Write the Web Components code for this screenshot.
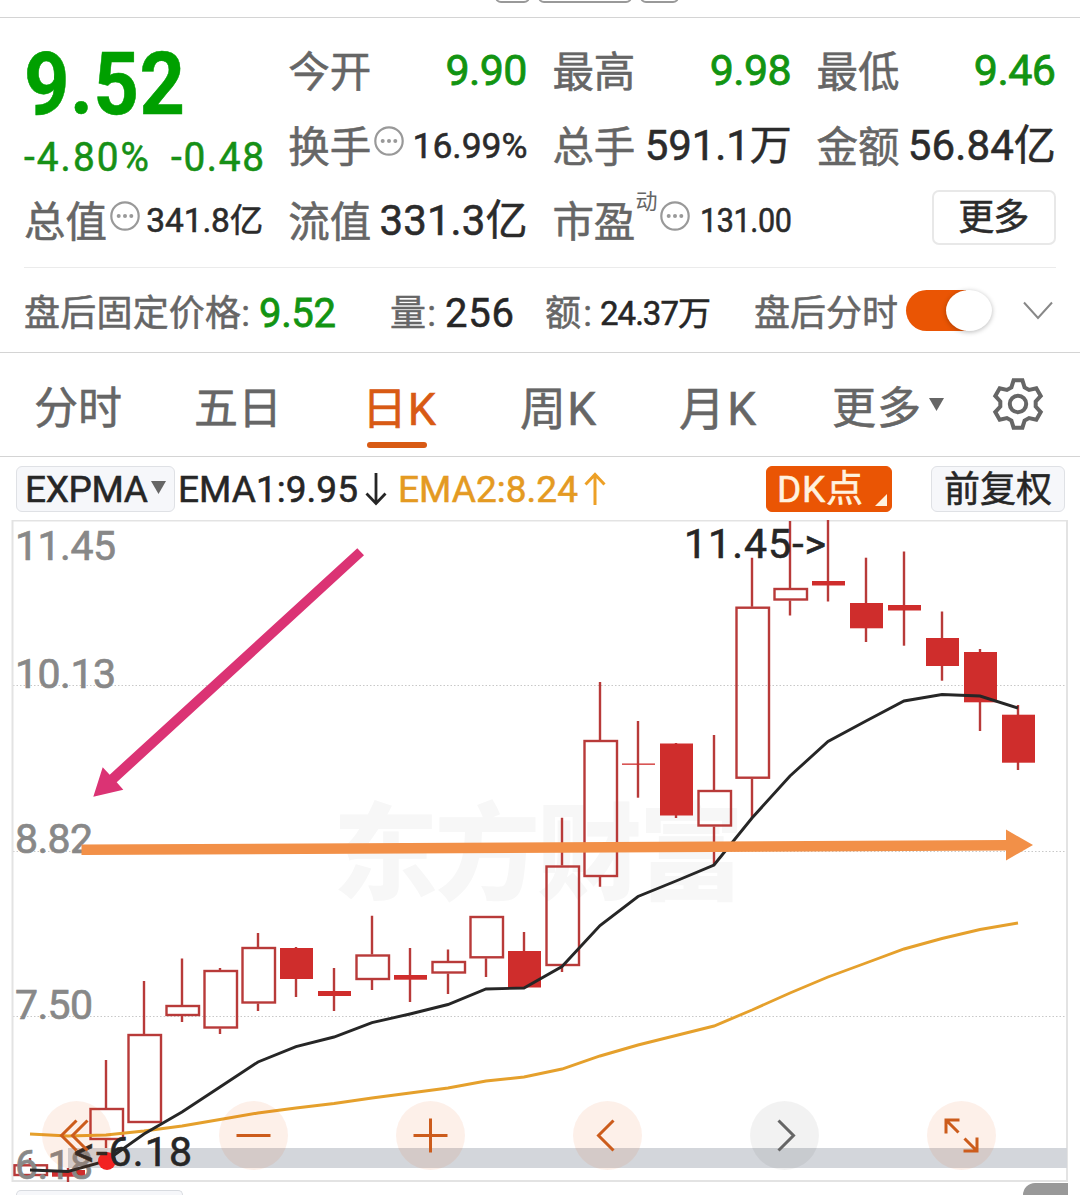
<!DOCTYPE html>
<html lang="zh-CN">
<head>
<meta charset="utf-8">
<title>日K</title>
<style>
html,body{margin:0;padding:0;background:#fff}
body{width:1080px;height:1195px;overflow:hidden;font-family:Roboto,"Noto Sans CJK SC",sans-serif;font-weight:400;-webkit-text-stroke:.55px currentColor;color:#2b2b2b}
</style>
</head>
<body>
<stock-page></stock-page>
<script>
const define=(name,html,init)=>customElements.define(name,class extends HTMLElement{
  constructor(){super();this.attachShadow({mode:'open'}).innerHTML=typeof html==='function'?html(this):html}
  connectedCallback(){if(init)init.call(this)}
});

/* Text run spread to a given advance width (w) at a given size (s), optionally condensed (x). */
define('fit-text','<style>:host{display:block;flex:none;line-height:1.2;white-space:nowrap}span{display:inline-block;transform-origin:0 50%;-webkit-text-stroke:var(--ts,.55px) currentColor}</style><span><slot></slot></span>',function(){
  const w=+this.getAttribute('w'),s=this.getAttribute('s'),x=+(this.getAttribute('x')||1),span=this.shadowRoot.querySelector('span');
  this.style.fontSize=s+'px';
  this.style.width=w+'px';
  const n=[...this.textContent].length,nat=span.getBoundingClientRect().width;
  if(n>1)span.style.letterSpacing=((w/x-nat)/(n-1))+'px';
  if(x!==1)span.style.transform='scaleX('+x+')';
});

define('info-dot',`<style>:host{display:block;flex:none;width:30px;height:30px}svg{display:block}</style>
<svg width="30" height="30" viewBox="0 0 30 30"><circle cx="15" cy="15" r="13.7" fill="none" stroke="#999" stroke-width="2.2"/><g fill="#999"><circle cx="8.7" cy="15" r="2"/><circle cx="15" cy="15" r="2"/><circle cx="21.3" cy="15" r="2"/></g></svg>`);

define('quote-cell',`<style>:host{display:flex;align-items:center;color:#2b2b2b;min-width:0}
.l{display:flex;align-items:center;color:#666;padding-top:5px}.v{margin-left:auto;padding-top:1px}</style>
<div class="l"><slot name="label"></slot></div><div class="v"><slot></slot></div>`);

define('top-strip',`<style>:host{display:flex;height:17px;border-bottom:1px solid #d4d4d4;box-sizing:content-box;padding-left:495px;gap:8px;align-items:flex-start;overflow:hidden;width:585px}
i{box-sizing:border-box;height:14px;margin-top:-11px;border:2px solid #999;border-radius:6px}</style>
<i style="width:35px"></i><i style="width:94px"></i><i style="width:39px"></i>`);

define('quote-panel',`<style>
:host{display:block;box-sizing:border-box;height:249px;padding:15px 24px 0;}
.grid{display:grid;grid-template-columns:repeat(4,239.3px);column-gap:24.9px;grid-template-rows:repeat(3,75px)}
.price{grid-row:1/3;color:#00a000}.price .big{height:102px;display:flex;align-items:center;font-weight:700}
.price .chg{height:46px;display:flex;align-items:center;gap:22px;color:#169016}
.g{color:#129412;--ts:.8px}
info-dot{margin:-13px 0 0 2.500px}
.dyn{align-self:flex-start;margin:-9px -20px 0 0;--ts:0px}
.dyn + info-dot{margin-left:22.500px}
.more{justify-self:end;align-self:start;box-sizing:border-box;margin-top:7px;width:124px;height:55px;border:2px solid #e8e8e8;border-radius:7px;display:flex;align-items:center;justify-content:center;padding-top:3px}
</style>
<div class="grid">
<div class="price"><div class="big"><fit-text s="88" w="161" x="0.9">9.52</fit-text></div><div class="chg"><fit-text s="40" w="125" x="0.97">-4.80%</fit-text><fit-text s="40" w="93" x="0.97">-0.48</fit-text></div></div>
<quote-cell><fit-text slot="label" s="41.5" w="83">今开</fit-text><fit-text class="g" s="43" w="82">9.90</fit-text></quote-cell>
<quote-cell><fit-text slot="label" s="41.5" w="83">最高</fit-text><fit-text class="g" s="43" w="82">9.98</fit-text></quote-cell>
<quote-cell><fit-text slot="label" s="41.5" w="83">最低</fit-text><fit-text class="g" s="43" w="82">9.46</fit-text></quote-cell>
<quote-cell><fit-text slot="label" s="41.5" w="83">换手</fit-text><info-dot slot="label"></info-dot><fit-text s="35.5" w="115">16.99%</fit-text></quote-cell>
<quote-cell><fit-text slot="label" s="41.5" w="83">总手</fit-text><fit-text s="42" w="147">591.1万</fit-text></quote-cell>
<quote-cell><fit-text slot="label" s="41.5" w="83">金额</fit-text><fit-text s="42" w="148">56.84亿</fit-text></quote-cell>
<quote-cell><fit-text slot="label" s="41.5" w="83">总值</fit-text><info-dot slot="label"></info-dot><fit-text s="33.5" w="117">341.8亿</fit-text></quote-cell>
<quote-cell><fit-text slot="label" s="41.5" w="83">流值</fit-text><fit-text s="42" w="148">331.3亿</fit-text></quote-cell>
<quote-cell><fit-text slot="label" s="41.5" w="83">市盈</fit-text><fit-text class="dyn" slot="label" s="22" w="22">动</fit-text><info-dot slot="label"></info-dot><fit-text s="32.5" w="92" x="0.94">131.00</fit-text></quote-cell>
<div class="more"><fit-text s="36" w="71">更多</fit-text></div>
</div>`);

define('toggle-switch',`<style>:host{display:flex;flex:none;width:86px;height:41px;border-radius:21px;background:linear-gradient(90deg,#ea5504 70%,transparent 70%);justify-content:flex-end}
i{width:46px;height:41px;border-radius:50%;background:#fff;box-shadow:0 1px 5px rgba(0,0,0,.28)}</style><i></i>`);

define('after-hours',`<style>:host{display:flex;box-sizing:border-box;height:85px;margin:0 24px;border-top:1px solid #ebebeb;align-items:center;color:#666;padding-top:9px}
.d{color:#262626;margin-top:-2px}.g{color:#129412;--ts:.8px;margin-top:-2px}toggle-switch{margin:-8px 0 0 8px}svg{margin:-8px 0 0 31px;flex:none}</style>
<fit-text s="36" w="226">盘后固定价格:</fit-text>
<fit-text class="g" s="40" w="77" style="margin-left:9px">9.52</fit-text>
<fit-text s="36" w="46" style="margin-left:54px">量:</fit-text>
<fit-text class="d" s="40" w="69" style="margin-left:9px">256</fit-text>
<fit-text s="36" w="47" style="margin-left:31px">额:</fit-text>
<fit-text class="d" s="33" w="111" style="margin-left:8px">24.37万</fit-text>
<fit-text s="36" w="144" style="margin-left:43px">盘后分时</fit-text>
<toggle-switch></toggle-switch>
<svg width="30" height="20" viewBox="0 0 30 20"><path d="M1 1.5 15 17 29 1.5" fill="none" stroke="#888" stroke-width="2"/></svg>`);

define('period-tab',`<style>:host{display:block;position:relative;flex:none;color:#666;line-height:0}:host([on]){color:#d85a14}
:host([on])::after{content:"";position:absolute;left:5px;bottom:-11px;width:60px;height:6px;border-radius:3px;background:#d85a14}</style><slot></slot>`);

function gear(){let d='';for(let k=0;k<6;k++){const a=k*Math.PI/3;for(const [x,y] of [[-6.6,-16.6],[-4.4,-23.7],[4.4,-23.7],[6.6,-16.6]])d+=(d?'L':'M')+(x*Math.cos(a)-y*Math.sin(a)).toFixed(2)+' '+(x*Math.sin(a)+y*Math.cos(a)).toFixed(2)}return d+'Z'}
define('period-tabs',`<style>:host{display:flex;box-sizing:border-box;height:105px;border-top:1px solid #d4d4d4;border-bottom:1px solid #d4d4d4;align-items:center;padding:10px 0 0 34px}
svg{flex:none}.t{margin:-10px 0 0 8px}.gear{margin:-11px 0 0 46px}</style>
<period-tab><fit-text s="44" w="88">分时</fit-text></period-tab>
<period-tab style="margin-left:72px"><fit-text s="44" w="88">五日</fit-text></period-tab>
<period-tab on style="margin-left:80px"><fit-text s="45" w="74">日K</fit-text></period-tab>
<period-tab style="margin-left:84px"><fit-text s="46" w="76">周K</fit-text></period-tab>
<period-tab style="margin-left:83px"><fit-text s="46" w="77">月K</fit-text></period-tab>
<period-tab style="margin-left:76px"><fit-text s="44" w="89">更多</fit-text></period-tab>
<svg class="t" width="15" height="13"><path d="M0 0H15L7.5 13Z" fill="#666"/></svg>
<svg class="gear" width="56" height="56" viewBox="-28 -28 56 56" fill="none" stroke="#666" stroke-width="4"><path d="${gear()}"/><circle r="8.2"/></svg>`);

define('tool-chip',`<style>:host{display:flex;flex:none;box-sizing:border-box;height:46px;align-items:center;border-radius:6px;border:1.5px solid #dfe1e5;background:#f6f7fa;position:relative;padding-top:4px}
:host([hot]){background:#ea5504;border-color:#ea5504;color:#fff2df}</style><slot></slot>`);

define('indicator-bar',`<style>:host{display:flex;box-sizing:border-box;height:63px;align-items:center;padding:0 0 0 16px;color:#262626}
svg{flex:none}.y{color:#e49a22}</style>
<tool-chip style="width:159px;padding-left:8px"><fit-text s="37" w="123">EXPMA</fit-text><svg style="margin:-7px 0 0 3px" width="15" height="13"><path d="M0 0H15L7.5 13Z" fill="#666"/></svg></tool-chip>
<fit-text s="37" w="180" style="margin-left:3px;padding-top:3px">EMA1:9.95</fit-text>
<svg style="margin-left:7px" width="22" height="34" viewBox="0 0 22 34" fill="none" stroke="#262626" stroke-width="2.8"><path d="M11 1V31M1.5 21.5 11 31.5 20.500 21.500"/></svg>
<fit-text class="y" s="37" w="180" style="margin-left:11px;padding-top:3px">EMA2:8.24</fit-text>
<svg style="margin-left:6px" width="22" height="34" viewBox="0 0 22 34" fill="none" stroke="#eda026" stroke-width="3"><path d="M11 33V3M1.500 12.500 11 2.500 20.500 12.500"/></svg>
<tool-chip hot style="width:126px;margin-left:160px;padding-left:10px"><fit-text s="37" w="86">DK点</fit-text><svg style="position:absolute;right:4px;bottom:5px" width="12" height="12"><path d="M12 0V12H0Z" fill="#fff2df"/></svg></tool-chip>
<tool-chip style="width:134px;margin-left:39px;padding:5px 0 0 12px"><fit-text s="36" w="108">前复权</fit-text></tool-chip>`);

/* Candles: centre x, high, body top, body bottom, low, hollow? */
const C=[[30,1158,1164.300,1176,1176,1],[68,1168,1170,1176.700,1182,0],[106,1060,1108,1140,1148,1],[144,981,1034,1123,1123,1],[182,958.500,1005,1016,1022,1],[220,968,970,1028.500,1034,1],[258,933,947,1003.500,1011,1],[296,947,948,979,997,0],[334,968,991,996,1011,0],[372,915.700,954.500,980,990,1],[410,948,975,979.700,1002,0],[448,949.500,961,973.500,994,1],[486,916,916,958.300,977,1],[524,932,951,987.500,987,0],[562,817.700,865.500,966,972,1],[600,682,740,877,886.700,1],[638,721,763.500,764.800,797.700,0],[676,743,743.500,815.500,818,0],[714,735,790,826.500,865,1],[752,557.700,606.700,778.700,818,1],[790,521,588,600.500,615.500,1],[828,520,581,585.500,601.500,0],[866,557.700,603,628.300,642,0],[904,551.500,605,610.500,645.700,0],[942,611.500,638,666,680.700,0],[980,649,652,702.300,731,0],[1018,705,714.700,762.700,770,0]];
const E1=[1170,1171.500,1161,1134,1112,1087,1062,1046.700,1037,1022.700,1014,1004.500,989,988,966.500,925.500,896.500,881,865,818,776,741.500,721,701,694.500,696,708];
const E2=[1134,1136,1135,1131,1126,1119.500,1113,1108,1103.500,1098,1093,1088,1081,1077,1069,1056,1045,1035.500,1026,1010,993,977,963,949,938.500,929.500,923];
const line=a=>a.map((y,i)=>(30+38*i)+','+y).join(' ');
const candles=C.map(([x,h,t,b,l,o])=>o
 ?`<path d="M${x} ${h}V${t}M${x} ${b}V${l}"/><rect x="${x-15.5}" y="${t+1}" width="32.500" height="${b-t-2}"/>`
 :`<path d="M${x} ${h}V${l}"/><rect x="${x-16}" y="${t}" width="33" height="${b-t}" fill="#cf2d2c" stroke="none"/>`).join('');

define('k-chart',`<style>:host{display:block;height:675px;-webkit-text-stroke:0}svg{display:block}text{font-size:41px}.gr{stroke:#888;stroke-width:.7px}.bk{stroke:#262626;stroke-width:.6px}</style>
<svg width="1080" height="675" viewBox="0 520 1080 675">
<text x="333" y="891" style="font-size:105px;font-weight:900" textLength="411" fill="#f7f7f7">东方财富</text>
<path d="M13 685.500H1067M13 851.500H1067M13 1016.500H1067" stroke="#c8c8c8" stroke-width="1" stroke-dasharray="1.500 2"/>
<path d="M12.500 520.500H1067V1181H12.500Z" fill="none" stroke="#e3e3e3" stroke-width="2"/>
<rect x="68" y="1148" width="999" height="20" fill="#d3d6db"/>
<g fill="none" stroke="#b83a39" stroke-width="2.400">${candles}</g>
<g class="gr" fill="#888"><text x="15" y="560" textLength="101">11.45</text><text x="15" y="687.500" textLength="101">10.13</text><text x="15" y="852.500" textLength="78">8.82</text><text x="15" y="1018.500" textLength="78">7.50</text><text x="15" y="1179" textLength="78">6.18</text></g>
<polyline points="${line(E2)}" fill="none" stroke="#e5a02c" stroke-width="2.900"/>
<polyline points="${line(E1)}" fill="none" stroke="#262626" stroke-width="2.900"/>
<circle cx="107" cy="1161" r="9" fill="#f22222"/>
<g class="bk" fill="#262626"><text x="684" y="557.500" textLength="142">11.45-&gt;</text><text x="74" y="1165.500" textLength="118">&lt;-6.18</text></g>
<path d="M357.300 548.300 109.700 774.700 102.700 767.300 93.300 796.700 123.300 789.700 116.700 782.300 364 555.300Z" fill="#db3374"/>
<path d="M81.500 844.500 1006 840V829.500L1033 845 1006 860.500V850.500L81.500 855Z" fill="#f29048"/>
</svg>`);

define('round-button',`<style>:host{display:block;flex:none;width:69px;height:69px;border-radius:50%;background:rgba(234,85,4,.085);color:#cc5c1c}:host([off]){background:rgba(0,0,0,.05);color:#666}svg{display:block}</style>
<svg width="69" height="69" viewBox="-34.500 -34.500 69 69" fill="none" stroke="currentColor" stroke-width="3"><path/></svg>`,function(){
 const p={first:'M0-15-15 0 0 15M11-15-4 0 11 15',minus:'M-17 0H17',plus:'M-17 0H17M0-17V17',prev:'M6-15-9 0 6 15',next:'M-6-15 9 0-6 15',full:'M-2-15.500H-15.500V-2M-15.500-15.500-3-3M2 15.500H15.500V2M15.500 15.500 3 3'};
 this.shadowRoot.querySelector('path').setAttribute('d',p[this.getAttribute('icon')]);
});

define('chart-controls',`<style>:host{position:absolute;left:42px;top:1101px;width:954px;display:flex;justify-content:space-between}</style>
<round-button icon="first"></round-button><round-button icon="minus"></round-button><round-button icon="plus"></round-button><round-button icon="prev"></round-button><round-button icon="next" off></round-button><round-button icon="full"></round-button>`);

define('bottom-peek',`<style>:host{position:absolute;left:0;right:12px;bottom:0;height:12px;display:flex;justify-content:space-between;align-items:flex-end;overflow:hidden;padding-left:16px}
.a{box-sizing:border-box;width:167px;height:5px;border:1.500px solid #d8dbe0;border-bottom:0;border-radius:6px 6px 0 0;background:#f6f7fa}.b{width:45px;height:12px;border-radius:12px 0 0 0;background:#999}</style><div class="a"></div><div class="b"></div>`);

define('stock-page',`<style>:host{display:block;position:relative;width:1080px;height:1195px;overflow:hidden;background:#fff}</style>
<top-strip></top-strip><quote-panel></quote-panel><after-hours></after-hours><period-tabs></period-tabs><indicator-bar></indicator-bar><k-chart></k-chart><chart-controls></chart-controls><bottom-peek></bottom-peek>`);
</script>
</body>
</html>
